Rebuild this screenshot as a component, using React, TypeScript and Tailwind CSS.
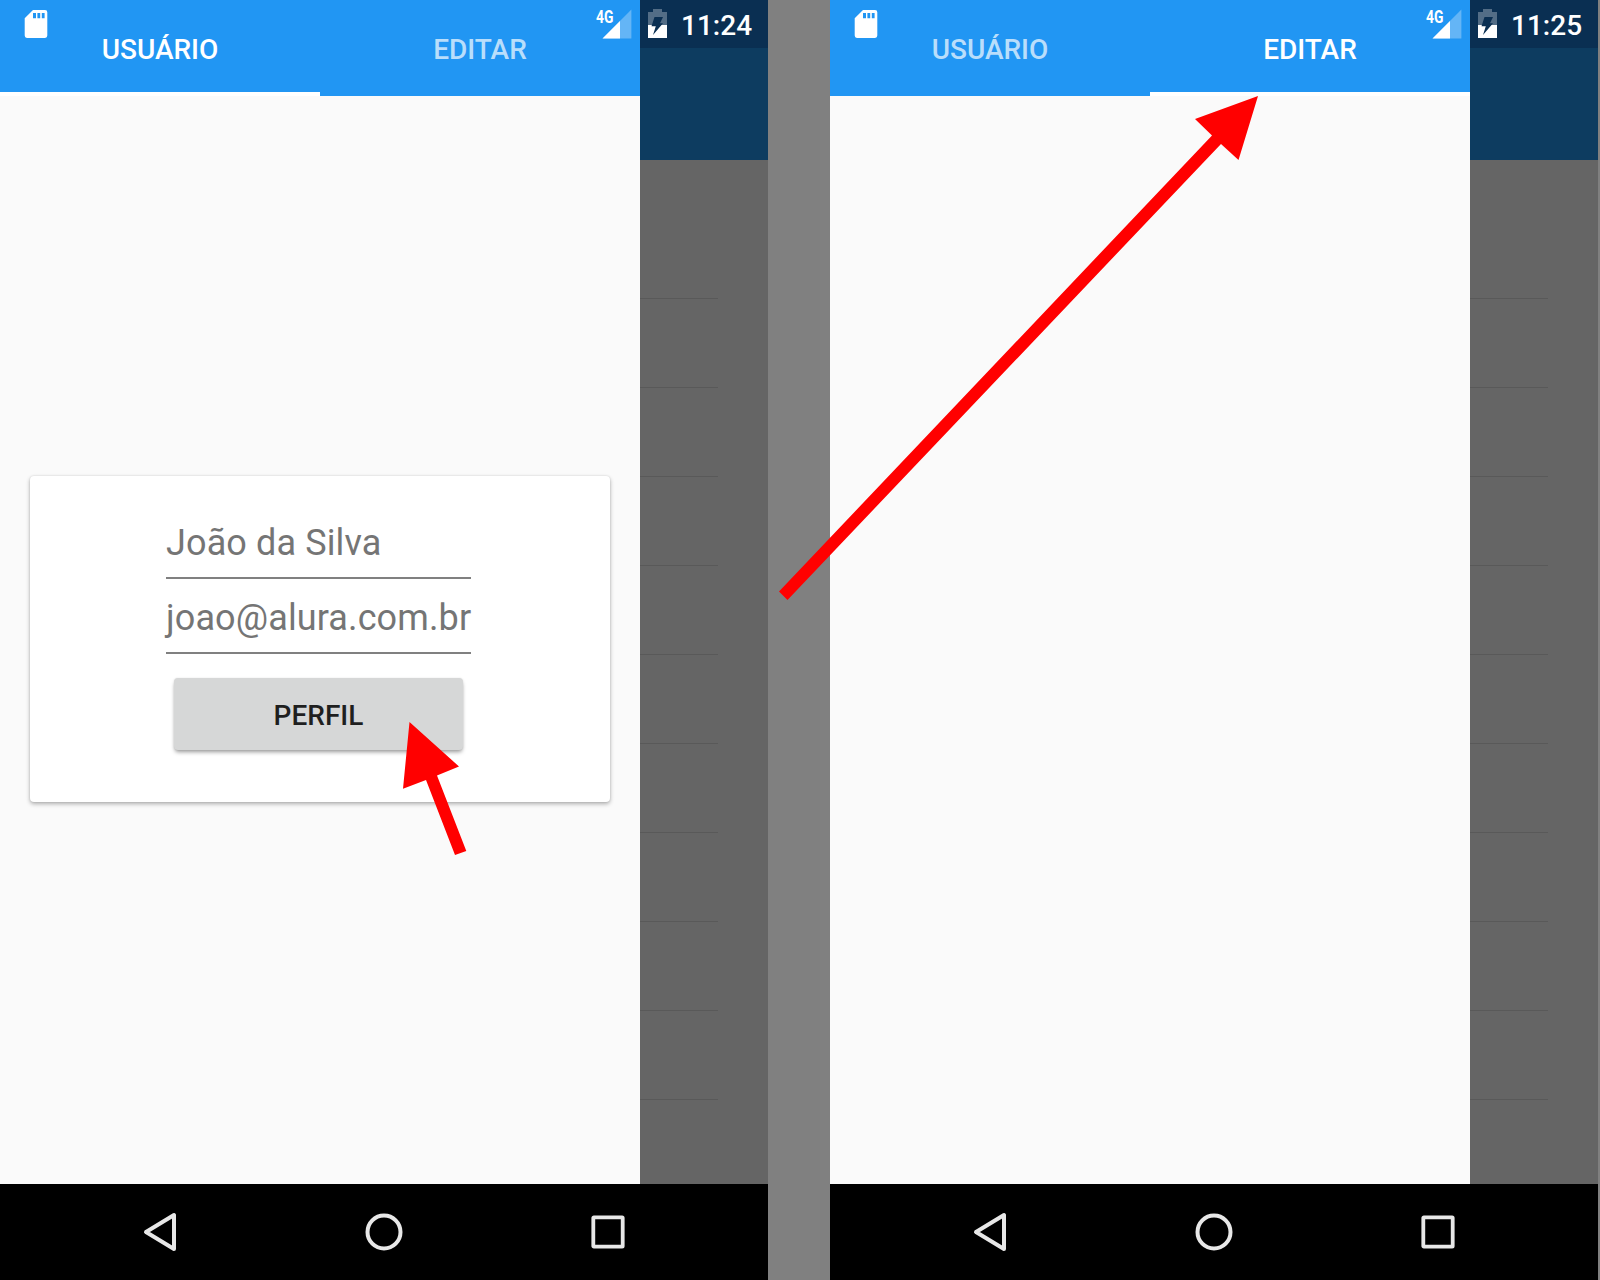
import React from "react";

function SdCardIcon() {
  return (
    <svg className="block h-7 w-6" viewBox="0 0 24 28">
      <path
        fill="#fff"
        fillRule="evenodd"
        d="M9 0H21Q23.3 0 23.3 2.300V25.600Q23.300 28 21 28H3Q.7 28 .7 25.600V8.300ZM9 3V8.200H12V3ZM13.400 3V8.200H16.200V3ZM17.800 3V8.200H20.600V3Z"
      />
    </svg>
  );
}

function SignalIcon() {
  return (
    <svg className="block h-8 w-9" viewBox="0 0 36 32">
      <path d="M35.400 1.500V30.500H6.500Z" fill="#fff" fillOpacity=".3" />
      <path d="M24 13V30.500H6.500Z" fill="#fff" />
    </svg>
  );
}

function BatteryIcon() {
  return (
    <svg className="block h-[29px] w-[19px]" viewBox="0 0 19 29">
      <path d="M0 3H5V0H14V3H19V16H0Z" fill="#fff" fillOpacity=".3" />
      <path d="M0 16H19V29H0Z" fill="#fff" />
      <path d="M6.500 8H15L12 14.200H15L5 26L7.800 17.300H3.500Z" fill="#0a2f52" />
    </svg>
  );
}

function StatusBar({ time }: { time: string }) {
  return (
    <div className="absolute inset-x-0 top-0 flex h-12 items-start">
      <div className="ml-6 mt-[10px]">
        <SdCardIcon />
      </div>
      <div className="ml-auto flex">
        <div className="relative mr-4 mt-2">
          <span className="absolute left-0 top-[2px] origin-left scale-x-[0.77] text-[18px] font-bold leading-[14px] text-white">
            4G
          </span>
          <SignalIcon />
        </div>
        <div className="mt-[9px]">
          <BatteryIcon />
        </div>
        <span className="ml-[14px] mt-[10px] block w-[87px] whitespace-nowrap text-[28px] font-medium leading-8 text-white">
          {time}
        </span>
      </div>
    </div>
  );
}

function Tabs({ active }: { active: number }) {
  return (
    <div className="grid h-24 grid-cols-2 bg-[#2196f3]">
      {["USUÁRIO", "EDITAR"].map((label, i) => (
        <div
          key={label}
          className={
            "flex h-24 items-center justify-center border-b-4 pt-[7px] text-[28px] font-medium leading-8 " +
            (i === active ? "border-white text-white" : "border-[#2196f3] text-white/70")
          }
        >
          {label}
        </div>
      ))}
    </div>
  );
}

function ProfileCard() {
  return (
    <div className="mx-[30px] mt-[380px] flex h-[326px] flex-col items-start rounded bg-white pl-[136px] pt-[40px] shadow-[0_2px_4px_rgba(0,0,0,0.3),0_0_2px_rgba(0,0,0,0.12)]">
      <div className="h-[63px] w-[305px] whitespace-nowrap border-b-2 border-[#808080] pt-[6px] text-[36px] leading-[42px] tracking-[0.12px] text-[#757575]">
        João da Silva
      </div>
      <div className="h-[75px] w-[305px] whitespace-nowrap border-b-2 border-[#808080] pt-[18px] text-[36px] leading-[42px] tracking-[0.12px] text-[#757575]">
        joao@alura.com.br
      </div>
      <button className="ml-2 mt-6 h-[72px] w-[289px] rounded bg-[#d6d7d7] pt-1 text-[28px] font-medium leading-8 text-[#1f1f1f] shadow-[0_3px_4px_-1px_rgba(0,0,0,0.4),0_0_2px_rgba(0,0,0,0.1)]">
        PERFIL
      </button>
    </div>
  );
}

function Backdrop() {
  return (
    <div className="flex w-32 flex-col bg-[#656565]">
      <div className="h-12 bg-[#0a2f52]" />
      <div className="h-28 bg-[#0d3c60]" />
      <div className="mt-[50px] flex flex-col">
        {Array.from({ length: 10 }, (_, i) => (
          <div key={i} className="h-[89px] w-[78px] pt-[88px]">
            <div className="h-px bg-[#595959]" />
          </div>
        ))}
      </div>
    </div>
  );
}

function NavBar() {
  return (
    <div className="flex h-24 items-center bg-black">
      <svg className="ml-[136px] block size-12" viewBox="0 0 48 48" fill="none" stroke="#e8e8e8">
        <path d="M38 7V41L10 24Z" strokeWidth="4" strokeLinejoin="round" />
      </svg>
      <svg className="ml-44 block size-12" viewBox="0 0 48 48" fill="none" stroke="#e8e8e8">
        <circle cx="24" cy="24" r="16.500" strokeWidth="4" />
      </svg>
      <svg className="ml-44 block size-12" viewBox="0 0 48 48" fill="none" stroke="#e8e8e8">
        <rect x="9.300" y="9.300" width="29.400" height="29.400" rx=".6" strokeWidth="3.800" />
      </svg>
    </div>
  );
}

function Phone({ active, time, children }: { active: number; time: string; children?: React.ReactNode }) {
  return (
    <div className="relative flex h-[1280px] w-[768px] shrink-0 flex-col overflow-hidden">
      <div className="flex h-[1184px] overflow-hidden">
        <div className="flex w-[640px] flex-col bg-[#fafafa]">
          <Tabs active={active} />
          {children}
        </div>
        <Backdrop />
      </div>
      <NavBar />
      <StatusBar time={time} />
    </div>
  );
}

export default function App() {
  return (
    <div className="relative flex h-[1280px] w-[1600px] gap-[62px] overflow-hidden bg-[#808080] font-['Roboto',sans-serif]">
      <Phone active={0} time="11:24">
        <ProfileCard />
      </Phone>
      <Phone active={1} time="11:25" />
      <svg className="pointer-events-none absolute inset-0 size-full" viewBox="0 0 1600 1280" fill="#f00">
        <path d="M409.500 722L459 766.500L437 775.500L466.300 851L455 855L426 780L403 788.800Z" />
        <path d="M1258 96L1238.500 160L1221 144L787.500 600L779 591.500L1212 135.500L1195 119Z" />
      </svg>
    </div>
  );
}
